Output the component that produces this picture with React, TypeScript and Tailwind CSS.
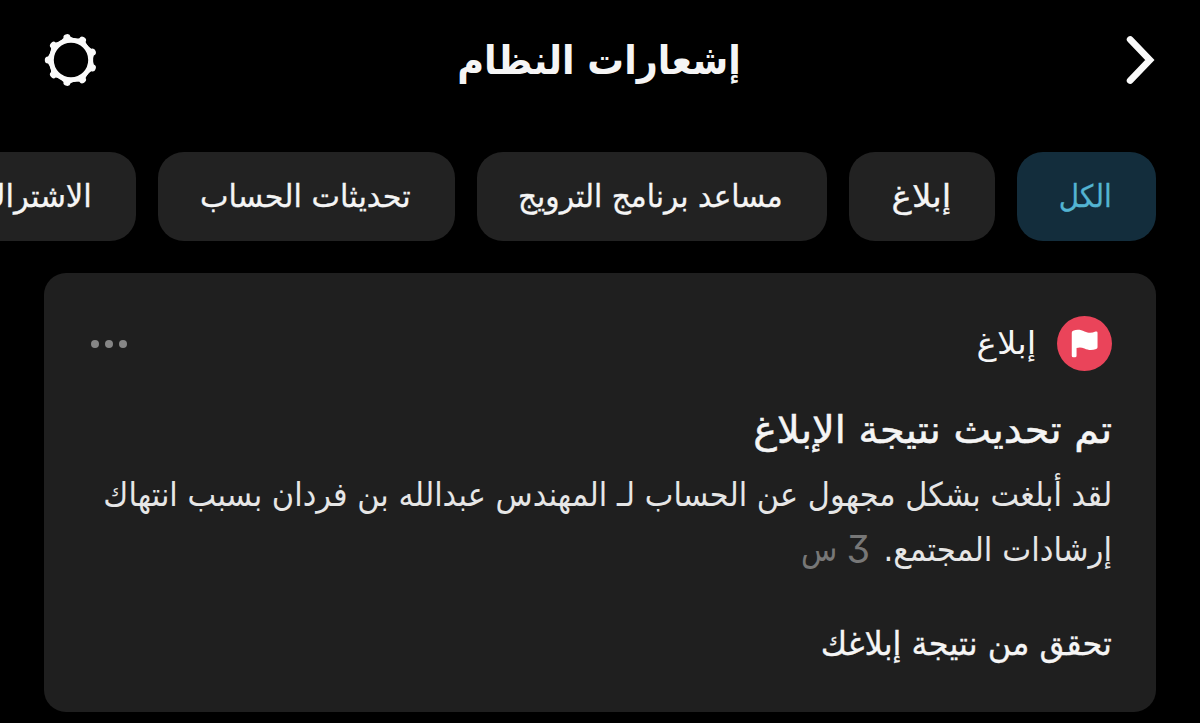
import { useState } from 'react';

const tabs = [
	{ label: 'الكل', width: 'w-[139px]', text: 'scale-x-[0.9]' },
	{ label: 'إبلاغ', width: 'w-[146px]', text: 'scale-x-[1.1]' },
	{ label: 'مساعد برنامج الترويج', width: 'w-[350px]', text: 'scale-x-[0.957]' },
	{ label: 'تحديثات الحساب', width: 'w-[297px]', text: 'scale-x-[0.977]' },
	{ label: 'الاشتراك', width: 'w-[200px]', text: 'scale-x-[0.99]' },
];

const GearIcon = () => {
	const teeth = [20, 60, 100, 140, 180, 220, 260, 300, 340];

	return (
		<svg className="h-[54px] w-[54px]" viewBox="-27 -27 54 54" fill="none">
			<circle r="19.7" stroke="#fafafa" strokeWidth="5" />
			{teeth.map((angle) => (
				<path key={angle} transform={`rotate(${angle})`} d="M20 -8.5 Q21.8 -5 23 -3.6 A3.2 3.6 0 0 1 23 3.6 Q21.8 5 20 8.5 Z" fill="#fafafa" />
			))}
		</svg>
	);
};

const FlagIcon = () => (
	<svg className="h-[55px] w-[55px]" viewBox="0 0 54 54">
		<circle cx="27" cy="27" r="27" fill="#ea445a" />
		<path
			d="M14.500 16.500 Q14.500 15 15.800 14.500 C20 12.800 23.500 13.600 27 15.200 C31 16.900 34 16.900 37.800 15.300 Q39.800 14.700 39.800 16.500 V30.800 Q39.800 32 38.500 32.400 C34 34 30.500 33.500 27 31.900 C24 30.700 21.500 30.700 19.200 31.500 V39 Q19.200 40.500 17.700 40.500 H16 Q14.500 40.500 14.500 39 Z"
			fill="#fff"
		/>
	</svg>
);

const App = () => {
	const [active, setActive] = useState<number>(0);

	return (
		<div dir="rtl" className="h-[723px] w-[1200px] overflow-hidden bg-black font-['DejaVu_Sans',sans-serif] text-[#f5f5f5]">
			<header className="flex h-[120px] items-center justify-between pr-[44px] pl-[44px]">
				<button className="flex w-[54px] justify-start">
					<svg className="h-[52px] w-[32px]" viewBox="0 0 32 52" fill="none">
						<path d="M6.200 5.500 L25.800 26 L6.200 46.500" stroke="#fafafa" strokeWidth="6.8" strokeLinecap="round" />
					</svg>
				</button>
				<h1 className="mr-[3px] scale-x-[0.915] text-[40px] leading-none font-bold whitespace-nowrap">إشعارات النظام</h1>
				<button className="flex w-[54px] justify-end">
					<GearIcon />
				</button>
			</header>

			<nav className="mt-8 flex gap-[22px] pr-[44px]">
				{tabs.map((tab, index) => (
					<button
						key={tab.label}
						onClick={() => setActive(index)}
						className={`flex h-[89px] shrink-0 items-center rounded-[26px] pr-[44px] text-[31px] leading-none whitespace-nowrap [-webkit-text-stroke:0.3px] ${tab.width} ${
							index === active ? 'bg-[#132d3c] text-[#53b4d2]' : 'bg-[#222222]'
						}`}>
						<span className={`origin-right ${tab.text}`}>{tab.label}</span>
					</button>
				))}
			</nav>

			<article className="mx-[44px] mt-8 h-[439px] rounded-[22px] bg-[#1f1f1f] px-[44px] pt-[43px]">
				<div className="flex h-[55px] items-center">
					<FlagIcon />
					<span className="mr-[21px] origin-right scale-x-[1.1] text-[31px] leading-none">إبلاغ</span>
					<button className="mr-auto flex gap-[6px] pl-[3px]">
						<span className="h-[8px] w-[8px] rounded-full bg-[#868686]" />
						<span className="h-[8px] w-[8px] rounded-full bg-[#868686]" />
						<span className="h-[8px] w-[8px] rounded-full bg-[#868686]" />
					</button>
				</div>
				<h2 className="mt-[31px] origin-right scale-x-[1.05] text-[38px] leading-[56px] whitespace-nowrap [-webkit-text-stroke:0.5px]">تم تحديث نتيجة الإبلاغ</h2>
				<div className="mt-[9px] text-[33px] leading-[55px] whitespace-nowrap text-[#e6e6e6]">
					<p className="flex">
						<span className="origin-right scale-x-[0.922]">لقد أبلغت بشكل مجهول عن الحساب لـ المهندس عبدالله بن فردان بسبب انتهاك</span>
					</p>
					<p className="flex h-[55px]">
						<span className="w-[242px] origin-right scale-x-[0.933]">إرشادات المجتمع.</span>
						<span className="flex gap-[9px] text-[#777777]">
							<span className="font-[family-name:Inter] text-[38px] [font-feature-settings:'cv09']">3</span>
							<span className="origin-right scale-x-[0.9]">س</span>
						</span>
					</p>
				</div>
				<p className="mt-[42px] origin-right scale-x-[0.97] text-[33px] leading-[50px] whitespace-nowrap [-webkit-text-stroke:0.3px]">تحقق من نتيجة إبلاغك</p>
			</article>
		</div>
	);
};

export default App;
